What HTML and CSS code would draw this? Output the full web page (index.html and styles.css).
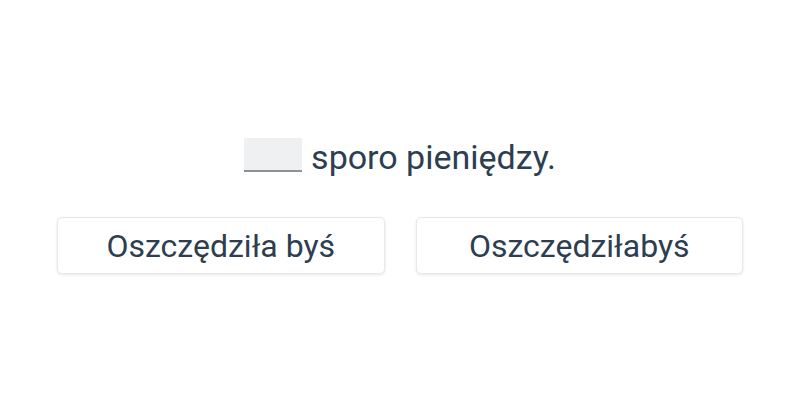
FILE: index.html
```html
<!DOCTYPE html>
<html lang="pl">
<head>
<meta charset="utf-8">
<link rel="stylesheet" href="styles.css">
</head>
<body>
<main class="exercise">
  <p class="sentence"><span class="blank"></span><span class="text">sporo pieniędzy.</span></p>
  <div class="options">
    <button class="option">Oszczędziła byś</button>
    <button class="option">Oszczędziłabyś</button>
  </div>
</main>
</body>
</html>
```

FILE: styles.css
```css
html, body {
  margin: 0;
  padding: 0;
  background: #ffffff;
}
body {
  width: 800px;
  height: 400px;
  font-family: Roboto, "Noto Sans", sans-serif;
  color: #2c3e50;
}
.exercise {
  display: flex;
  flex-direction: column;
  align-items: center;
  padding: 138px 57px 0;
}
.sentence {
  margin: 0;
  font-size: 34px;
  line-height: 30px;
  display: flex;
  align-items: flex-end;
  gap: 9px;
}
.blank {
  display: block;
  width: 58px;
  height: 32px;
  background: #eef0f1;
  border-bottom: 2px solid #8a9396;
}
.options {
  margin-top: 45px;
  display: grid;
  grid-template-columns: 1fr 1fr;
  gap: 31px;
  width: 100%;
}
.option {
  height: 57px;
  background: #ffffff;
  border: 1px solid #e6e8ea;
  border-radius: 5px;
  box-shadow: 0 1px 3px rgba(0,0,0,0.10);
  font-family: Roboto, "Noto Sans", sans-serif;
  font-size: 32px;
  color: #2c3e50;
  padding: 0;
}
```
